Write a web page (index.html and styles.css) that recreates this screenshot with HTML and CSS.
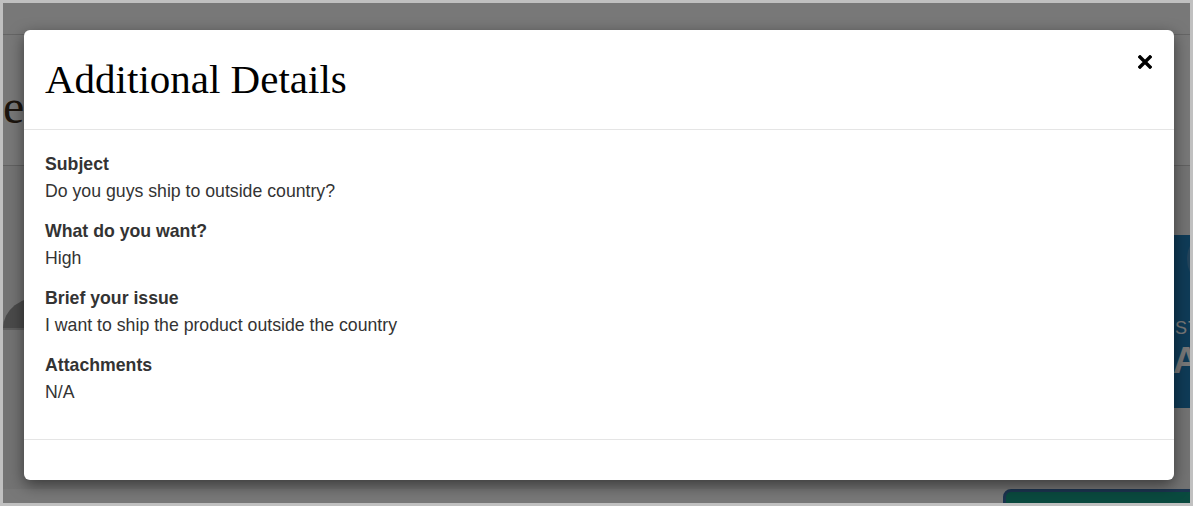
FILE: index.html
```html
<!DOCTYPE html>
<html lang="en">
<head>
<meta charset="utf-8">
<title>Additional Details</title>
<link rel="stylesheet" href="styles.css">
</head>
<body>
<div class="frame">
  <div class="page">
    <div class="site-header"></div>
    <div class="hero">
      <h1 class="hero-title">Home</h1>
    </div>
    <div class="section">
      <div class="section-left">
        <div class="side-shape"></div>
      </div>
      <div class="section-right">
        <div class="promo">
          <div class="promo-circle"></div>
          <div class="promo-small">STORE</div>
          <div class="promo-big">AI</div>
        </div>
      </div>
    </div>
    <div class="bottom-row">
      <div class="green-btn"></div>
    </div>

    <div class="overlay">
      <div class="modal">
        <div class="modal-header">
          <h2 class="modal-title">Additional Details</h2>
          <button class="close" aria-label="Close">
            <svg width="14" height="14" viewBox="0 0 14 14"><path d="M2 2 L12 12 M12 2 L2 12" stroke="#000" stroke-width="3.4" stroke-linecap="square"/></svg>
          </button>
        </div>
        <div class="modal-body">
          <div class="field">
            <div class="field-label">Subject</div>
            <div class="field-value">Do you guys ship to outside country?</div>
          </div>
          <div class="field">
            <div class="field-label">What do you want?</div>
            <div class="field-value">High</div>
          </div>
          <div class="field">
            <div class="field-label">Brief your issue</div>
            <div class="field-value">I want to ship the product outside the country</div>
          </div>
          <div class="field">
            <div class="field-label">Attachments</div>
            <div class="field-value">N/A</div>
          </div>
        </div>
        <div class="modal-footer"></div>
      </div>
    </div>
  </div>
</div>
</body>
</html>
```

FILE: styles.css
```css
* { box-sizing: border-box; }
html, body { margin: 0; padding: 0; }
body { background: #c0c0c0; }

.frame {
  width: 1193px;
  height: 506px;
  border: 3px solid #c0c0c0;
}
.page {
  position: relative;
  width: 1187px;
  height: 500px;
  overflow: hidden;
  background: #fff;
  font-family: "Liberation Sans", Arial, sans-serif;
}

.site-header {
  height: 32px;
  border-bottom: 1px solid #d6d6d6;
}
.hero {
  height: 130px;
  padding-top: 44px;
}
.hero-title {
  margin: 0 0 0 -96px;
  font-family: "Liberation Serif", "Times New Roman", serif;
  font-weight: normal;
  font-size: 48px;
  line-height: 56px;
  color: #3d2e20;
  white-space: nowrap;
}

.section {
  height: 324px;
  border-top: 1px solid #cfcfcf;
  background: #f4f4f4;
  display: flex;
  justify-content: space-between;
}
.section-left { width: 300px; padding-top: 130px; }
.side-shape {
  width: 300px;
  height: 34px;
  background: #9d9d9d;
  border-top-left-radius: 40px 32px;
  border-bottom: 2px solid #c8c8c8;
}
.section-right {
  width: 320px;
  margin-right: -133px;
  padding-top: 69px;
}
.promo {
  position: relative;
  height: 173px;
  background: #207db9;
  color: #fff;
  overflow: hidden;
  padding-top: 82px;
}
.promo-circle {
  position: absolute;
  left: 184px;
  top: -6px;
  width: 60px;
  height: 60px;
  border-radius: 50%;
  border: 6px solid #4b8fc0;
}
.promo-small {
  padding-left: 172px;
  font-size: 18px;
  line-height: 22px;
  letter-spacing: 1px;
}
.promo-big {
  padding-left: 170px;
  font-size: 36px;
  font-weight: bold;
  line-height: 44px;
}

.bottom-row {
  display: flex;
  justify-content: flex-end;
}
.green-btn {
  width: 200px;
  height: 30px;
  margin-right: -13px;
  background: #179d86;
  border: 3px solid #3a6fa8;
  border-radius: 8px 0 0 0;
}

.overlay {
  position: absolute;
  inset: 0;
  background: rgba(0, 0, 0, 0.53);
}
.modal {
  position: absolute;
  left: 21px;
  top: 27px;
  width: 1150px;
  background: #fff;
  border-radius: 6px;
  box-shadow: 0 5px 15px rgba(0, 0, 0, 0.5);
}

.modal-header {
  height: 100px;
  border-bottom: 1px solid #e5e5e5;
  padding: 0 21px;
  display: flex;
  justify-content: space-between;
  align-items: center;
}
.modal-title {
  margin: 0 0 2px;
  font-family: "Liberation Serif", "Times New Roman", serif;
  font-weight: normal;
  font-size: 41px;
  line-height: 48px;
  color: #000;
}
.close {
  align-self: flex-start;
  margin-top: 25px;
  margin-right: 1px;
  padding: 0;
  border: 0;
  background: none;
  width: 14px;
  height: 14px;
  display: block;
}
.close svg { display: block; }

.modal-body {
  padding: 21px 21px 20px;
  color: #333;
  font-size: 17.7px;
  line-height: 27px;
}
.field { margin-bottom: 13px; }
.field-label { font-weight: bold; }

.modal-footer {
  height: 41px;
  border-top: 1px solid #e5e5e5;
}
```
